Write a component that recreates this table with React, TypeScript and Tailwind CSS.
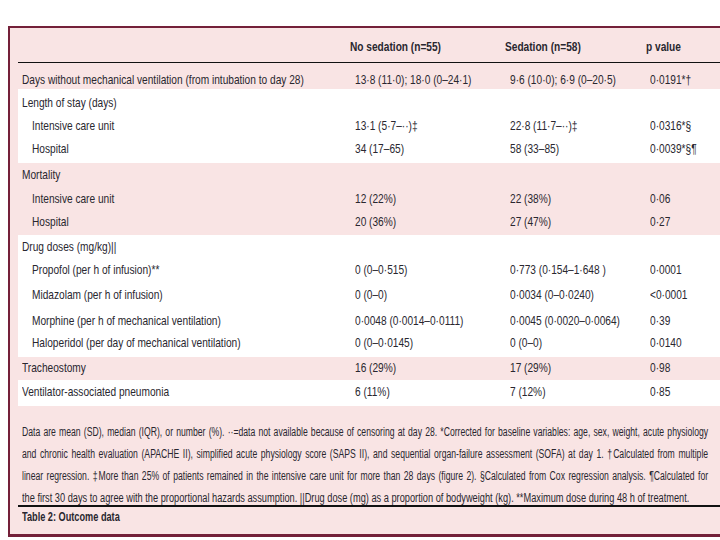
const FONT = "[font-family:'Liberation_Sans',Arial,sans-serif]";

type Row = {
  label: string;
  a?: string;
  b?: string;
  p?: string;
  indent?: boolean;
  h: string;
};

type Band = { pink: boolean; rows: Row[] };

// the source uses a condensed face; squeeze Liberation Sans to the same width
function T({ children, className = "scale-x-[0.78]" }: { children: React.ReactNode; className?: string }) {
  return <span className={`inline-block origin-left whitespace-nowrap ${className}`}>{children}</span>;
}

const BANDS: Band[] = [
  {
    pink: true,
    rows: [
      {
        label: "Days without mechanical ventilation (from intubation to day 28)",
        a: "13·8 (11·0); 18·0 (0–24·1)",
        b: "9·6 (10·0); 6·9 (0–20·5)",
        p: "0·0191*†",
        h: "h-[26px] pt-[9px]",
      },
    ],
  },
  {
    pink: false,
    rows: [
      { label: "Length of stay (days)", h: "h-[24px] pt-[6px]" },
      { label: "Intensive care unit", indent: true, a: "13·1 (5·7–··)‡", b: "22·8 (11·7–··)‡", p: "0·0316*§", h: "h-[25px] pt-[5px]" },
      { label: "Hospital", indent: true, a: "34 (17–65)", b: "58 (33–85)", p: "0·0039*§¶", h: "h-[25px] pt-[3px]" },
    ],
  },
  {
    pink: true,
    rows: [
      { label: "Mortality", h: "h-[24px] pt-[4px]" },
      { label: "Intensive care unit", indent: true, a: "12 (22%)", b: "22 (38%)", p: "0·06", h: "h-[24px] pt-[4px]" },
      { label: "Hospital", indent: true, a: "20 (36%)", b: "27 (47%)", p: "0·27", h: "h-[24px] pt-[3px]" },
    ],
  },
  {
    pink: false,
    rows: [
      { label: "Drug doses (mg/kg)||", h: "h-[24px] pt-[4px]" },
      { label: "Propofol (per h of infusion)**", indent: true, a: "0 (0–0·515)", b: "0·773 (0·154–1·648 )", p: "0·0001", h: "h-[25px] pt-[3px]" },
      { label: "Midazolam (per h of infusion)", indent: true, a: "0 (0–0)", b: "0·0034 (0–0·0240)", p: "<0·0001", h: "h-[24px] pt-[3px]" },
      { label: "Morphine (per h of mechanical ventilation)", indent: true, a: "0·0048 (0·0014–0·0111)", b: "0·0045 (0·0020–0·0064)", p: "0·39", h: "h-[25px] pt-[5px]" },
      { label: "Haloperidol (per day of mechanical ventilation)", indent: true, a: "0 (0–0·0145)", b: "0 (0–0)", p: "0·0140", h: "h-[24px] pt-[2px]" },
    ],
  },
  {
    pink: true,
    rows: [{ label: "Tracheostomy", a: "16 (29%)", b: "17 (29%)", p: "0·98", h: "h-[23px] pt-[3px]" }],
  },
  {
    pink: false,
    rows: [{ label: "Ventilator-associated pneumonia", a: "6 (11%)", b: "7 (12%)", p: "0·85", h: "h-[26px] pt-[4px]" }],
  },
];

const NOTES = [
  "Data are mean (SD), median (IQR), or number (%). ··=data not available because of censoring at day 28. *Corrected for baseline variables: age, sex, weight, acute physiology",
  "and chronic health evaluation (APACHE II), simplified acute physiology score (SAPS II), and sequential organ-failure assessment (SOFA) at day 1. †Calculated from multiple",
  "linear regression. ‡More than 25% of patients remained in the intensive care unit for more than 28 days (figure 2). §Calculated from Cox regression analysis. ¶Calculated for",
  "the first 30 days to agree with the proportional hazards assumption. ||Drug dose (mg) as a proportion of bodyweight (kg). **Maximum dose during 48 h of treatment.",
];

const COLS = "grid grid-cols-[337px_155px_140px_1fr]";

export default function App() {
  return (
    <div className={`w-[720px] h-[540px] overflow-hidden bg-white pt-[26px] pl-[8px] ${FONT}`}>
      <div className="h-[511px] border-t-2 border-l-2 border-b-[3px] border-[#742039] bg-[#f9e4e4] pl-[8px] text-[#29272f] text-[13px]">
        <div className={`${COLS} h-[34.5px] items-start pt-[11px] leading-[15px] border-b-[1.5px] border-[#111] font-bold`}>
          <div />
          <div className="-ml-[5px]"><T>No sedation (n=55)</T></div>
          <div className="-ml-[5px]"><T>Sedation (n=58)</T></div>
          <div className="-ml-[4px]"><T>p value</T></div>
        </div>

        {BANDS.map((band, i) => (
          <div key={i} className={band.pink ? "bg-[#f9e4e4]" : "bg-white"}>
            {band.rows.map((r) => (
              <div key={r.label + i} className={`${COLS} items-start leading-[15px] ${r.h}`}>
                <div className={r.indent ? "pl-[14px]" : "pl-[4px]"}><T>{r.label}</T></div>
                <div><T>{r.a}</T></div>
                <div><T>{r.b}</T></div>
                <div><T>{r.p}</T></div>
              </div>
            ))}
          </div>
        ))}

        <div className="pt-[15px] pl-[4px] text-[12px]">
          {NOTES.map((n, i) => (
            <div key={i} className={`leading-[22px] ${i === 3 ? "h-[18px]" : "h-[22px]"}`}>
              {i === 3 ? (
                <T className="scale-x-[0.77]">{n}</T>
              ) : (
                <T className="scale-x-[0.72] w-[953px] [text-align-last:justify]">{n}</T>
              )}
            </div>
          ))}
        </div>
        <div className="border-t-[2.5px] border-[#111] h-[27px] pl-[4px] pt-[3px] leading-[15px] font-bold text-[12px]">
          <T className="scale-x-[0.765]">Table 2: Outcome data</T>
        </div>
      </div>
    </div>
  );
}
